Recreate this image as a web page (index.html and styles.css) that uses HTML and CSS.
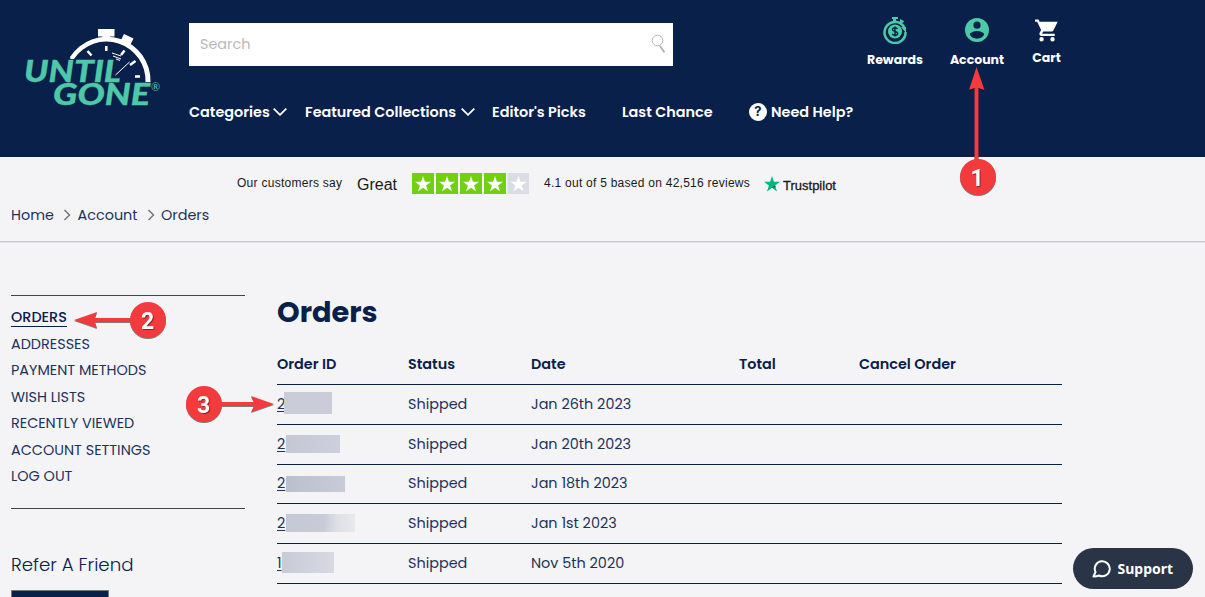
FILE: index.html
```html
<!DOCTYPE html>
<html lang="en">
<head>
<meta charset="utf-8">
<title>Orders - Until Gone</title>
<link rel="stylesheet" href="styles.css">
</head>
<body>
<header class="header">
  <a class="logo">
    <svg width="140" height="82" viewBox="0 0 140 82">
      <path d="M46.500 31L50 31A39 39 0 0 1 121.500 54H126.500A43.700 43.700 0 0 0 46 29z" fill="#fff"/>
      <path d="M74 1h16.500v7.500H86V11h-7.500V8.500H74zM100 6l9.500 4.500-3 6-3-1.500-1.500 3-4-2 1.500-3-2.500-1z" fill="#fff"/>
      <path d="M82.300 18v5M63.500 23l4 4.500M100.500 22.500l-3.500 4.500M111.500 33l-5.500 4M111 48.500h5" stroke="#fff" stroke-width="2.500"/>
      <path d="M91.500 47l14-13M88 25l9 3M89 28l8 3M92 31l4 1.500" stroke="#fff" stroke-width="1"/>
      <text class="logo-text" x="0" y="53.500" textLength="97" lengthAdjust="spacingAndGlyphs">UNTIL</text>
      <text class="logo-text" x="29" y="76.500" textLength="97" lengthAdjust="spacingAndGlyphs">GONE</text>
      <text class="logo-mark" x="127" y="63">®</text>
    </svg>
  </a>
  <div class="main">
    <div class="search">
      <span>Search</span>
      <svg width="16" height="20" viewBox="0 0 16 20" fill="none" stroke="#b5b5b5"><circle cx="6.500" cy="6.500" r="5.300"/><path d="M9 12l4.500 6.500" stroke-width="2"/></svg>
    </div>
    <nav class="nav">
      <a class="categories"><span>Categories</span><svg class="chev" width="14" height="8" viewBox="0 0 14 8"><path d="M.7 .7L7 6.800 13.300 .7"/></svg></a>
      <a class="featured"><span>Featured Collections</span><svg class="chev" width="14" height="8" viewBox="0 0 14 8"><path d="M.7 .7L7 6.800 13.300 .7"/></svg></a>
      <a class="picks"><span>Editor's Picks</span></a>
      <a class="last"><span>Last Chance</span></a>
      <a class="help"><i class="q">?</i><span>Need Help?</span></a>
    </nav>
  </div>
  <div class="tools">
    <a class="tool rewards">
      <svg width="26" height="27" viewBox="0 0 26 27"><path d="M10 0h6v2h-2v3h-3V2h-1zM18 2l4 2-1 2-1-.5-1 2-2-1 1-2z" fill="#4dc9a8"/><path d="M22.500 11A10.500 10.500 0 1 0 23.500 15" fill="none" stroke="#4dc9a8" stroke-width="2.500"/><circle cx="13" cy="14.500" r="7" fill="#4dc9a8"/><path d="M19 10h5v6z" fill="#4dc9a8"/><path d="M15.500 12c-1-2-5-1.600-5 .5 0 2.500 5.200 1.300 5.200 4 0 2.200-4.600 2.400-5.400.2M13 9.500v10" fill="none" stroke="#08204a" stroke-width="1.400"/></svg>
      <span>Rewards</span>
    </a>
    <a class="tool account">
      <svg width="24" height="24" viewBox="2 2 20 20" fill="#4dc9a8"><path d="M12 2a10 10 0 1 0 0 20 10 10 0 0 0 0-20zm0 3a3 3 0 1 1 0 6 3 3 0 0 1 0-6zm0 14.200a7.200 7.200 0 0 1-6-3.220c.03-1.990 4-3.080 6-3.080s5.970 1.090 6 3.080a7.200 7.200 0 0 1-6 3.220z"/></svg>
      <span>Account</span>
    </a>
    <a class="tool cart">
      <svg width="23" height="23" viewBox="1 2 21 20" fill="#fff"><path d="M7 18a2 2 0 1 0 0 4 2 2 0 0 0 0-4zM1 2v2h2l3.600 7.590-1.350 2.450C4.520 15.370 5.480 17 7 17h12v-2H7.420l1.130-2h7.450c.75 0 1.410-.41 1.750-1.030L21.700 4H5.210l-.94-2zm16 16a2 2 0 1 0 0 4 2 2 0 0 0 0-4z"/></svg>
      <span>Cart</span>
    </a>
  </div>
</header>

<div class="trust">
  <span class="say">Our customers say</span>
  <span class="great">Great</span>
  <svg class="stars" width="118" height="22" viewBox="0 0 118 22">
    <defs><path id="star" d="M11 3l1.900 5.800H19l-4.900 3.600 1.900 5.900-5-3.600-5 3.600 1.900-5.900L3 8.800h6.100z"/></defs>
    <path d="M0 0h22v21H0zM24 0h22v21H24zM48 0h22v21H48zM72 0h22v21H72z" fill="#73cf11"/>
    <path d="M95.500 0H117v21H95.500z" fill="#dcdce6"/>
    <g fill="#fff"><use href="#star"/><use href="#star" x="24"/><use href="#star" x="48"/><use href="#star" x="72"/><use href="#star" x="95.500"/></g>
  </svg>
  <span class="based">4.1 out of 5 based on 42,516 reviews</span>
  <svg class="tp-star" width="16" height="16" viewBox="0 0 16 16"><path d="M8 0l1.900 5.800H16l-4.900 3.700L13 15.500 8 11.800 3 15.500l1.900-6L0 5.800h6.100z" fill="#00b67a"/><path d="M11.100 9.500l.5 1.600L8 11.800z" fill="#005128"/></svg>
  <span class="tp">Trustpilot</span>
</div>

<div class="crumbs">
  <span class="c-home">Home</span><svg width="8" height="12" viewBox="0 0 8 12"><path d="M1.500 1l5 5-5 5"/></svg>
  <span class="c-account">Account</span><svg width="8" height="12" viewBox="0 0 8 12"><path d="M1.500 1l5 5-5 5"/></svg>
  <span>Orders</span>
</div>

<div class="content">
  <aside class="side">
    <ul class="menu">
      <li class="active"><span>ORDERS</span></li>
      <li>ADDRESSES</li>
      <li>PAYMENT METHODS</li>
      <li>WISH LISTS</li>
      <li>RECENTLY VIEWED</li>
      <li>ACCOUNT SETTINGS</li>
      <li>LOG OUT</li>
    </ul>
    <h2 class="refer">Refer A Friend</h2>
    <div class="refer-btn"></div>
  </aside>
  <main class="orders">
    <h1>Orders</h1>
    <div class="row head"><span>Order ID</span><span>Status</span><span>Date</span><span>Total</span><span>Cancel Order</span></div>
    <div class="row"><span class="id"><u>2</u><i class="mask m1"></i></span><span>Shipped</span><span>Jan 26th 2023</span></div>
    <div class="row"><span class="id"><u>2</u><i class="mask m2"></i></span><span>Shipped</span><span>Jan 20th 2023</span></div>
    <div class="row"><span class="id"><u>2</u><i class="mask m3"></i></span><span>Shipped</span><span>Jan 18th 2023</span></div>
    <div class="row"><span class="id"><u>2</u><i class="mask m4"></i></span><span>Shipped</span><span>Jan 1st 2023</span></div>
    <div class="row"><span class="id"><u class="one">1</u><i class="mask m5"></i></span><span>Shipped</span><span>Nov 5th 2020</span></div>
  </main>
</div>

<svg class="callouts" width="1205" height="597" viewBox="0 0 1205 597">
  <g class="marks">
    <path d="M974.500 164V88l-5.500 2 7.500-23 8 23-6-2v76z"/>
    <circle cx="978" cy="177" r="18"/>
    <path d="M132 318H95l2-6-23 8 23 8-2-6h37z"/>
    <circle cx="148" cy="320" r="18"/>
    <path d="M220 402h34l-3-6 23 8-23 8 3-6h-34z"/>
    <circle cx="204" cy="404" r="18"/>
  </g>
  <g class="nums"><text x="977" y="185.500">1</text><text x="147.500" y="328.500">2</text><text x="203.500" y="412.500">3</text></g>
</svg>

<div class="support">
  <svg width="19" height="19" viewBox="0 0 19 19" fill="none" stroke="#fff" stroke-width="2"><path d="M1.500 17.500l2-4.500A7.500 7.500 0 1 1 7 16.500q-3 1.300-5.500 1z" stroke-linejoin="round"/></svg>
  <span>Support</span>
</div>
</body>
</html>
```
FILE: styles.css
```css
* { box-sizing: border-box; }
body { margin: 0; height: 597px; overflow: hidden; background: #f4f4f7; color: #08204a; font: 14.400px/20px Poppins, Inter, sans-serif; }
svg { display: block; flex: none; }
span { white-space: nowrap; }
.header { display: flex; height: 157px; background: #08204a; color: #fff; }
.logo { width: 189px; padding: 28px 0 0 24px; }
.logo-text { font: italic 900 30px Lato, sans-serif; fill: #4dc9a8; stroke: #4dc9a8; stroke-width: .3px; }
.logo-mark { font: 11px Lato, sans-serif; fill: #4dc9a8; }
.main { width: 678px; padding-top: 23px; }
.search { display: flex; justify-content: space-between; align-items: center; width: 484px; height: 43px; padding: 0 6px 0 11px; background: #fff; color: #b8b8b8; }
.search span { margin-bottom: 2px; }
.search svg { margin-bottom: 1px; }
.nav { display: flex; margin-top: 36px; font-weight: 600; }
.nav a { display: flex; align-items: center; }
.chev { margin-left: 4px; fill: none; stroke: #fff; stroke-width: 1.800; }
.categories { width: 116px; }
.categories span, .featured span { flex: none; }
.categories span { width: 80px; }
.featured { width: 187px; }
.featured span { width: 152px; }
.picks { width: 130px; }
.last { width: 127px; }
.q { width: 18px; height: 18px; margin-right: 4px; border-radius: 50%; background: #fff; color: #08204a; font: 700 13px/17px Inter, sans-serif; text-align: center; }
.tools { display: flex; font-size: 12.500px; font-weight: 700; }
.tool { display: flex; flex-direction: column; align-items: center; padding-top: 17px; }
.tool span { line-height: 18px; }
.rewards { width: 56px; }
.rewards span { margin-top: 7px; }
.account { width: 54px; margin-left: 27px; padding-top: 18px; }
.account span { margin-top: 9px; }
.cart { width: 29px; margin-left: 28px; padding-top: 19px; }
.cart span { margin-top: 7px; }
.trust { display: flex; align-items: flex-start; height: 48px; padding: 16px 0 0 237px; color: #191919; font: 12px/20px "Liberation Sans", sans-serif; }
.say { width: 120px; letter-spacing: .27px; }
.great { width: 55px; font-size: 16px; line-height: 23px; }
.based { width: 221px; margin-left: 14px; letter-spacing: .255px; }
.tp-star { margin-top: 3px; margin-left: -1px; }
.tp { margin-left: 3px; font-size: 13px; line-height: 26px; -webkit-text-stroke: .3px #191919; }
.crumbs { display: flex; align-items: center; height: 38px; padding: 0 0 17px 11px; border-bottom: 1px solid #e2e2e6; box-shadow: inset 0 -1px #c9c9ce; color: #1d3359; }
.crumbs svg { margin-right: 6.500px; fill: none; stroke: #777; stroke-width: 1.500; }
.c-home { width: 52px; }
.c-account { width: 69px; }
.content { display: flex; padding: 52px 0 0 11px; }
.side { width: 234px; flex: none; }
.menu { height: 214px; margin: 0; padding: 8px 0 0; list-style: none; border-top: 1px solid #444; border-bottom: 1px solid #444; color: #1d3359; }
.menu li { height: 26.400px; line-height: 26.400px; }
.menu .active { height: 27px; color: #08204a; font-weight: 500; }
.active span { display: inline-block; height: 23px; border-bottom: 1px solid #08204a; }
.refer { margin: 43px 0 0; font-size: 18.200px; font-weight: 300; line-height: 26px; }
.refer-btn { width: 98px; height: 7px; margin-top: 12px; border: 1px solid #777; border-bottom: 0; background: #08204a; }
.orders { width: 785px; margin-left: 32px; }
h1 { margin: 0; height: 34px; font-size: 28.800px; font-weight: 700; line-height: 34px; }
.row { display: grid; grid-template-columns: 131px 123px 208px 120px 1fr; align-items: center; height: 39.800px; padding-bottom: 1.400px; border-bottom: 1px solid #08204a; color: #1d3359; }
.head { height: 41px; margin-top: 15px; padding: 0; color: #08204a; font-weight: 600; }
.id { display: flex; align-items: center; }
.id u { width: 8.500px; text-underline-offset: 2px; }
.id .one { width: 5px; }
.mask { height: 18px; background: linear-gradient(90deg, #c4c8d3, #cdd0dc); }
.m1 { width: 48px; height: 22px; margin: -2px 0 0 -2px; background: #cacdd9; }
.m2 { width: 54px; }
.m3 { width: 59px; height: 16px; margin-top: 2px; background: linear-gradient(90deg, #b9c0cc, #c8cbd8); }
.m4 { width: 69px; background: linear-gradient(90deg, #c5c9d4, #c8cbd8 55%, #dfe0e7 75%, #e8e8ed); }
.m5 { width: 52px; height: 21px; margin-top: -1px; background: linear-gradient(90deg, #c7cbd6, #d8d9e2); }
.callouts { position: absolute; top: 0; left: 0; }
.marks { fill: #f33b3d; filter: drop-shadow(0 1px .5px rgba(0, 0, 0, .5)); }
.nums { fill: #fff; font: 700 23px Roboto, sans-serif; text-anchor: middle; filter: drop-shadow(1px 1px .5px rgba(0, 0, 0, .4)); }
.support { position: absolute; left: 1073px; top: 548px; display: flex; align-items: center; width: 120px; height: 41px; padding-left: 19px; border-radius: 21px; background: #293446; color: #fff; font: 700 14px "Noto Sans", sans-serif; }
.support span { margin-left: 6.500px; }
```
